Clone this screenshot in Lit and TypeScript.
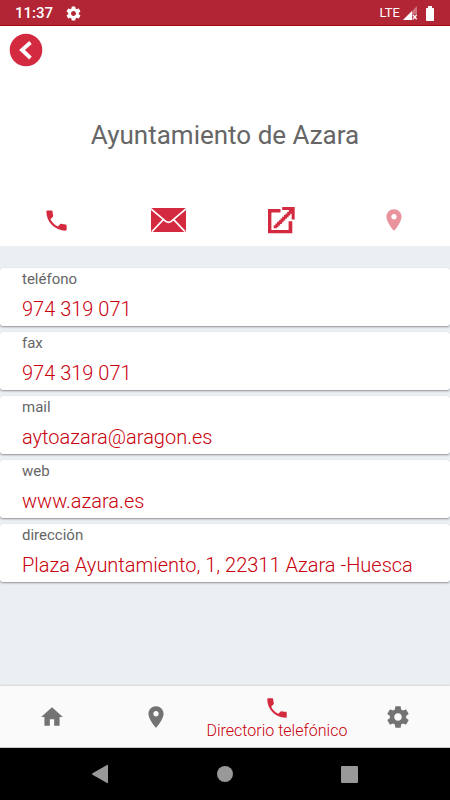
import { LitElement, html, css, svg } from "lit";
import { customElement, state } from "lit/decorators.js";
import { classMap } from "lit/directives/class-map.js";

const phone = svg`<path d="M6.62 10.79c1.44 2.83 3.76 5.14 6.59 6.59l2.2-2.2c.27-.27.67-.36 1.02-.24 1.12.37 2.33.57 3.57.57.55 0 1 .45 1 1V20c0 .55-.45 1-1 1-9.39 0-17-7.61-17-17 0-.55.45-1 1-1h3.5c.55 0 1 .45 1 1 0 1.25.2 2.45.57 3.57.11.35.03.74-.25 1.02l-2.2 2.2z"/>`;
const pin = svg`<path d="M12 2C8.13 2 5 5.13 5 9c0 5.25 7 13 7 13s7-7.75 7-13c0-3.87-3.13-7-7-7zm0 9.5c-1.38 0-2.5-1.12-2.5-2.5s1.12-2.5 2.5-2.5 2.5 1.12 2.5 2.5-1.12 2.5-2.5 2.5z"/>`;
const home = svg`<path d="M10 20v-6h4v6h5v-8h3L12 3 2 12h3v8z"/>`;
const gear = svg`<path d="M19.43 12.98c.04-.32.07-.64.07-.98s-.03-.66-.07-.98l2.11-1.65c.19-.15.24-.42.12-.64l-2-3.46c-.12-.22-.39-.3-.61-.22l-2.49 1c-.52-.4-1.08-.73-1.69-.98l-.38-2.65C14.46 2.18 14.25 2 14 2h-4c-.25 0-.46.18-.49.42l-.38 2.65c-.61.25-1.17.59-1.69.98l-2.49-1c-.23-.09-.49 0-.61.22l-2 3.46c-.13.22-.07.49.12.64l2.11 1.65c-.04.32-.07.65-.07.98s.03.66.07.98l-2.11 1.65c-.19.15-.24.42-.12.64l2 3.46c.12.22.39.3.61.22l2.49-1c.52.4 1.08.73 1.69.98l.38 2.65c.03.24.24.42.49.42h4c.25 0 .46-.18.49-.42l.38-2.65c.61-.25 1.17-.59 1.69-.98l2.49 1c.23.09.49 0 .61-.22l2-3.46c.12-.22.07-.49-.12-.64l-2.11-1.65zM12 15.5c-1.93 0-3.5-1.57-3.5-3.5s1.57-3.5 3.5-3.5 3.5 1.57 3.5 3.5-1.57 3.5-3.5 3.5z"/>`;

const fields = [
  { label: "teléfono", value: "974 319 071", href: "tel:974319071" },
  { label: "fax", value: "974 319 071", href: "tel:974319071" },
  { label: "mail", value: "aytoazara@aragon.es", href: "mailto:aytoazara@aragon.es" },
  { label: "web", value: "www.azara.es", href: "http://www.azara.es" },
  { label: "dirección", value: "Plaza Ayuntamiento, 1, 22311 Azara -Huesca", href: "#mapa" },
];

const tabs = [
  { name: "Inicio", icon: home },
  { name: "Mapa", icon: pin },
  { name: "Directorio telefónico", icon: phone },
  { name: "Ajustes", icon: gear },
];

@customElement("app-root")
export class AppRoot extends LitElement {
  @state() private active = 2;

  static styles = css`
    :host {
      display: flex;
      flex-direction: column;
      min-height: 100vh;
      background: #ebeff2;
      font-family: Roboto, "Liberation Sans", sans-serif;
      color: #666;
    }
    * { box-sizing: border-box; }
    svg { display: block; fill: currentColor; }
    button {
      border: 0;
      padding: 0;
      background: none;
      font: inherit;
      color: inherit;
      cursor: pointer;
    }
    a { color: inherit; text-decoration: none; }

    .status {
      display: flex;
      align-items: center;
      gap: 12px;
      height: 26px;
      padding: 1px 15px 0;
      background: #b22535;
      border-bottom: 1px solid #ac0610;
      color: #fff;
    }
    .clock { font-size: 15px; line-height: 24px; font-weight: 500; }
    .signals {
      display: flex;
      align-items: center;
      gap: 3px;
      margin-left: auto;
      font-size: 13px;
      line-height: 24px;
    }
    .battery { margin-left: 4px; }

    header { background: #fff; padding: 7px 0 11px; }
    .back { display: block; margin-left: 9px; }
    h1 {
      margin: 52px 0 54px;
      font-size: 26px;
      line-height: 32px;
      font-weight: 400;
      text-align: center;
    }
    .actions { display: grid; grid-template-columns: repeat(4, 1fr); }
    .action {
      display: flex;
      align-items: center;
      justify-content: center;
      height: 30px;
      color: #d32a40;
    }
    .action:disabled { opacity: 0.5; cursor: default; }

    main { flex: 1; }
    dl {
      display: flex;
      flex-direction: column;
      gap: 6px;
      margin: 0;
      padding: 22px 0;
    }
    .card {
      padding: 1px 22px 3px;
      background: #fff;
      border-radius: 3px;
      box-shadow: 0 1px 2px rgba(0, 0, 0, 0.4);
    }
    dt { font-size: 15px; line-height: 20px; color: #666; }
    dd { margin: 0; padding-top: 6px; font-size: 20px; line-height: 28px; font-weight: 300; color: #c8000c; }

    .tabs {
      display: flex;
      height: 62px;
      background: #fafafa;
      box-shadow: 0 -1px 2px rgba(0, 0, 0, 0.1);
      border-bottom: 1px solid #c8c8c8;
    }
    .tab {
      flex: 3;
      display: flex;
      flex-direction: column;
      align-items: center;
      justify-content: center;
      min-width: 0;
      color: #737373;
    }
    .tab.active { flex: 4; padding-top: 2px; color: #d32a40; }
    .caption {
      font-size: 16px;
      line-height: 20px;
      font-weight: 300;
      white-space: nowrap;
      color: #c8000c;
    }

    .system {
      display: flex;
      align-items: center;
      justify-content: center;
      gap: 100px;
      height: 52px;
      background: #000;
      color: #999;
    }
  `;

  private icon(shape: unknown, size: number) {
    return html`<svg width=${size} height=${size} viewBox="0 0 24 24" aria-hidden="true">${shape}</svg>`;
  }

  render() {
    return html`
      <div class="status">
        <span class="clock">11:37</span>
        ${this.icon(gear, 17)}
        <div class="signals">
          <span>LTE</span>
          <svg width="15" height="14" viewBox="0 0 15 14" aria-hidden="true">
            <path d="M14 0v14H0z" opacity=".35" />
            <path d="M9 5v9H0z" />
            <path d="M10 9l3.6 4M13.6 9L10 13" stroke="#b22535" stroke-width="3" />
            <path d="M10 9l3.6 4M13.6 9L10 13" stroke="#fff" stroke-width="1.3" />
          </svg>
          <svg class="battery" width="10" height="15" viewBox="0 0 10 15" aria-hidden="true">
            <path d="M3 0h4v2h1.3Q9 2 9 2.700V14.200Q9 15 8.200 15H1.800Q1 15 1 14.200V2.700Q1 2 1.700 2H3z" />
          </svg>
        </div>
      </div>

      <header>
        <button class="back" aria-label="Volver">
          <svg width="34" height="34" viewBox="0 0 34 34">
            <circle cx="17" cy="17" r="16.300" fill="#d32a40" />
            <path d="M21.500 9.500L13 17l8.500 8" fill="none" stroke="#fff" stroke-width="3.800" />
          </svg>
        </button>
        <h1>Ayuntamiento de Azara</h1>
        <div class="actions">
          <button class="action" aria-label="Llamar">${this.icon(phone, 27)}</button>
          <button class="action" aria-label="Enviar correo">
            <svg width="35" height="24" viewBox="0 0 35 24">
              <rect width="35" height="24" rx="1.500" />
              <path d="M0 .8L14.500 13.200Q17.500 15.600 20.500 13.200L35 .8M1 23.500L12.300 11.600M34 23.500L22.700 11.600" fill="none" stroke="#fff" stroke-width="1.700" />
            </svg>
          </button>
          <button class="action" aria-label="Abrir web">
            <svg width="27" height="27" viewBox="0 0 80 80">
              <path d="M0 6H37V16H10V68H61V42H72V78H0z" />
              <path d="M42 0H79V37H70V20H66V25H61V30H56V35H51V40H46V45H41V50H36V55H31V60H26V63H17V54H22V49H27V44H32V39H37V34H42V29H47V24H52V19H57V14H62V9H42z" />
            </svg>
          </button>
          <button class="action" aria-label="Ver en mapa" disabled>${this.icon(pin, 26)}</button>
        </div>
      </header>

      <main>
        <dl>
          ${fields.map(
            (f) => html`<div class="card">
              <dt>${f.label}</dt>
              <dd><a href=${f.href}>${f.value}</a></dd>
            </div>`
          )}
        </dl>
      </main>

      <nav class="tabs">
        ${tabs.map(
          (t, i) => html`<button
            class=${classMap({ tab: true, active: i === this.active })}
            aria-label=${t.name}
            @click=${() => (this.active = i)}
          >
            ${this.icon(t.icon, 26)}
            ${i === this.active ? html`<span class="caption">${t.name}</span>` : null}
          </button>`
        )}
      </nav>

      <div class="system">
        <button aria-label="Atrás">
          <svg width="24" height="24" viewBox="0 0 24 24"><path d="M19 3.500v17q0 1-1 .5L3.500 12.700q-1-.7 0-1.400L18 3q1-.5 1 .5z" /></svg>
        </button>
        <button aria-label="Inicio del sistema">
          <svg width="24" height="24" viewBox="0 0 24 24"><circle cx="12" cy="12" r="8" /></svg>
        </button>
        <button aria-label="Recientes">
          <svg width="24" height="24" viewBox="0 0 24 24"><rect x="4" y="4" width="17" height="17" rx="1" /></svg>
        </button>
      </div>
    `;
  }
}
